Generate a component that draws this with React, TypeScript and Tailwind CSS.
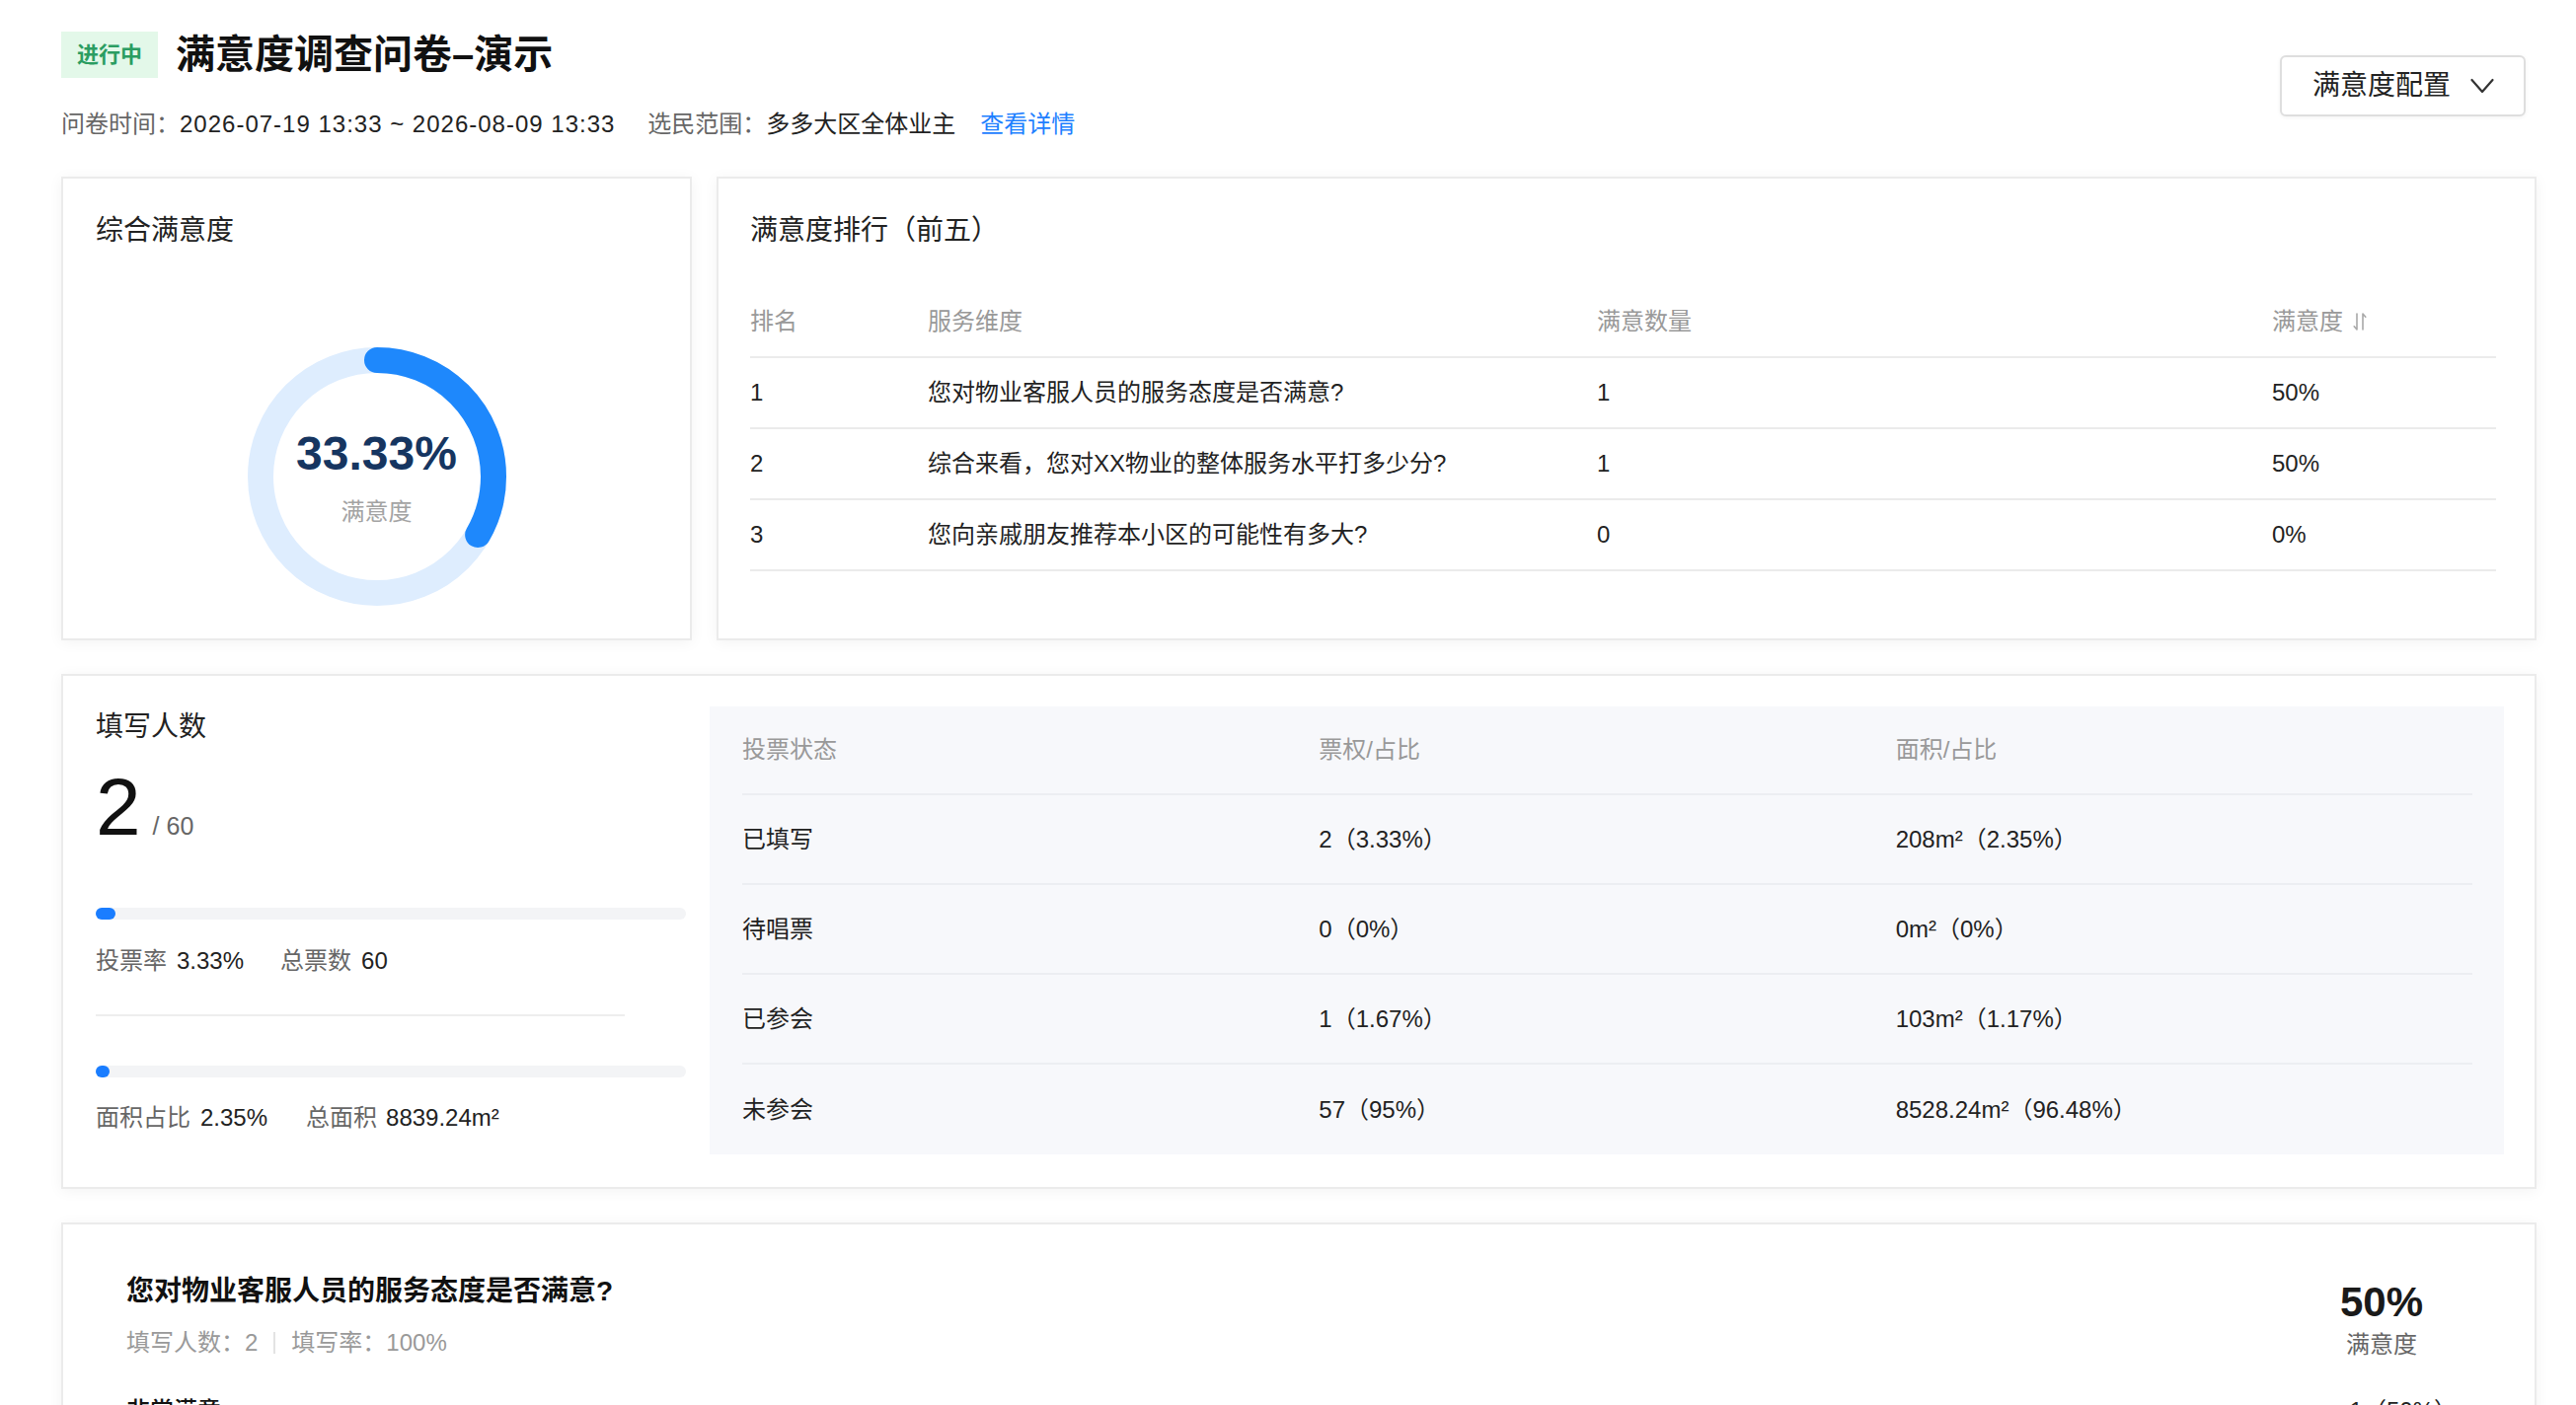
import React from "react";

const ranking = [
  { rank: 1, name: "您对物业客服人员的服务态度是否满意?", count: 1, rate: "50%" },
  { rank: 2, name: "综合来看，您对XX物业的整体服务水平打多少分?", count: 1, rate: "50%" },
  { rank: 3, name: "您向亲戚朋友推荐本小区的可能性有多大?", count: 0, rate: "0%" },
];

const votes = [
  { status: "已填写", weight: "2（3.33%）", area: "208m²（2.35%）" },
  { status: "待唱票", weight: "0（0%）", area: "0m²（0%）" },
  { status: "已参会", weight: "1（1.67%）", area: "103m²（1.17%）" },
  { status: "未参会", weight: "57（95%）", area: "8528.24m²（96.48%）" },
];

function SortIcon() {
  return (
    <svg width="14" height="20" viewBox="0 0 14 20" fill="none" stroke="#a8a8a8" strokeWidth="1.6" strokeLinecap="round" strokeLinejoin="round">
      <path d="M4 2V18L1.2 14.8" />
      <path d="M10 18V2L12.8 5.2" />
    </svg>
  );
}

function Donut({ percent }: { percent: number }) {
  const r = 118;
  const c = 2 * Math.PI * r;
  return (
    <div className="relative h-[262px] w-[262px]">
      <svg width="262" height="262" viewBox="0 0 262 262" className="-rotate-90">
        <circle cx="131" cy="131" r={r} fill="none" stroke="#deedfe" strokeWidth="26" />
        <circle
          cx="131"
          cy="131"
          r={r}
          fill="none"
          stroke="#1e88fc"
          strokeWidth="26"
          strokeLinecap="round"
          strokeDasharray={`${(c * percent) / 100} ${c}`}
        />
      </svg>
      <div className="absolute inset-0 flex flex-col items-center justify-center pt-[4px]">
        <div className="text-[48px] font-bold leading-none text-[#163560]">{percent.toFixed(2)}%</div>
        <div className="mt-[19px] text-[24px] leading-[32px] text-[#a3a3a3]">满意度</div>
      </div>
    </div>
  );
}

function Bar({ percent }: { percent: number }) {
  return (
    <div className="h-[12px] w-full rounded-full bg-[#f3f4f6]">
      <div className="h-full min-w-[12px] rounded-full bg-[#1a7dff]" style={{ width: `${percent}%` }} />
    </div>
  );
}

const card = "border-2 border-[#ebebeb] bg-white shadow-[0_2px_14px_rgba(0,0,0,0.05)]";

export default function App() {
  return (
    <div className="min-h-screen bg-white pb-[60px] pl-[62px] pr-[40px] pt-[32px] font-['Liberation_Sans','Noto_Sans_CJK_SC',sans-serif] text-[#222]">
      <header className="flex items-center justify-between">
        <div>
          <div className="flex items-center gap-[18px]">
            <span className="flex h-[47px] items-center bg-[#e3f8e9] px-[16px] text-[22px] font-bold text-[#2b9d62]">进行中</span>
            <h1 className="text-[40px] font-bold leading-[47px] text-[#111]">满意度调查问卷–演示</h1>
          </div>
          <div className="mt-[31px] flex items-center text-[24px] leading-[32px]">
            <span className="text-[#666]">问卷时间：</span>
            <span className="tracking-[1px] text-[#222]">2026-07-19 13:33 ~ 2026-08-09 13:33</span>
            <span className="ml-[33px] text-[#666]">选民范围：</span>
            <span className="text-[#222]">多多大区全体业主</span>
            <a className="ml-[25px] text-[#1e80ff]" href="#">查看详情</a>
          </div>
        </div>
        <button className="mr-[11px] flex h-[62px] items-center gap-[20px] rounded-[6px] border-2 border-[#dedede] bg-white pl-[31px] pr-[30px] text-[28px] text-[#222] shadow-[0_1px_4px_rgba(0,0,0,0.05)]">
          满意度配置
          <svg width="24" height="16" viewBox="0 0 24 16" fill="none" stroke="#333" strokeWidth="2.2" strokeLinecap="round" strokeLinejoin="round">
            <path d="M1.5 2L12 14L22.5 2" />
          </svg>
        </button>
      </header>

      <section className="mt-[37px] flex gap-[25px]">
        <div className={`${card} h-[470px] w-[639px] pl-[33px] pt-[35px]`}>
          <h2 className="text-[28px] leading-[36px]">综合满意度</h2>
          <div className="mt-[100px] flex justify-center pr-[33px]">
            <Donut percent={33.33} />
          </div>
        </div>

        <div className={`${card} h-[470px] flex-1 pl-[32px] pr-[39px] pt-[35px]`}>
          <h2 className="text-[28px] leading-[36px]">满意度排行（前五）</h2>
          <div className="mt-[39px] text-[24px]">
            <div className="grid h-[72px] grid-cols-[180px_678px_684px_1fr] items-center border-b-2 border-[#ebebeb] text-[#999]">
              <span>排名</span>
              <span>服务维度</span>
              <span>满意数量</span>
              <span className="flex items-center gap-[10px]">
                满意度
                <SortIcon />
              </span>
            </div>
            {ranking.map((row) => (
              <div key={row.rank} className="grid h-[72px] grid-cols-[180px_678px_684px_1fr] items-center border-b-2 border-[#ebebeb]">
                <span>{row.rank}</span>
                <span>{row.name}</span>
                <span>{row.count}</span>
                <span>{row.rate}</span>
              </div>
            ))}
          </div>
        </div>
      </section>

      <section className={`${card} mt-[34px] flex gap-[24px] pb-[33px] pl-[33px] pr-[31px] pt-[31px]`}>
        <div className="w-[598px] shrink-0 pt-[3px]">
          <h2 className="text-[28px] leading-[36px]">填写人数</h2>
          <div className="mt-[22px] flex items-baseline">
            <span className="text-[82px] font-medium leading-none text-[#111]">2</span>
            <span className="ml-[12px] text-[25px] leading-[32px] text-[#666]">/ 60</span>
          </div>
          <div className="mt-[61px]">
            <Bar percent={3.33} />
          </div>
          <div className="mt-[26px] text-[24px] leading-[32px]">
            <span className="text-[#666]">投票率</span>
            <span className="ml-[10px]">3.33%</span>
            <span className="ml-[37px] text-[#666]">总票数</span>
            <span className="ml-[10px]">60</span>
          </div>
          <div className="mt-[38px] h-[2px] w-[536px] bg-[#eeeeee]" />
          <div className="mt-[50px]">
            <Bar percent={2.35} />
          </div>
          <div className="mt-[25px] text-[24px] leading-[32px]">
            <span className="text-[#666]">面积占比</span>
            <span className="ml-[10px]">2.35%</span>
            <span className="ml-[39px] text-[#666]">总面积</span>
            <span className="ml-[9px]">8839.24m²</span>
          </div>
        </div>

        <div className="flex-1 bg-[#f7f8fb] pl-[33px] pr-[32px] text-[24px]">
          <div className="grid h-[90px] grid-cols-3 items-center border-b-2 border-[#eceef2] text-[#999]">
            <span>投票状态</span>
            <span>票权/占比</span>
            <span>面积/占比</span>
          </div>
          {votes.map((row, i) => (
            <div
              key={row.status}
              className={`grid h-[91px] grid-cols-3 items-center ${i < votes.length - 1 ? "border-b-2 border-[#eceef2]" : ""}`}
            >
              <span>{row.status}</span>
              <span>{row.weight}</span>
              <span>{row.area}</span>
            </div>
          ))}
        </div>
      </section>

      <section className={`${card} mt-[34px] pb-[40px] pl-[64px] pr-[55px] pt-[50px]`}>
        <div className="flex items-start justify-between">
          <div>
            <h3 className="text-[28px] font-bold leading-[36px] text-[#111]">您对物业客服人员的服务态度是否满意?</h3>
            <div className="mt-[18px] flex items-center text-[24px] leading-[32px] text-[#999]">
              <span>填写人数：2</span>
              <span className="mx-[16px] h-[22px] w-[2px] bg-[#e3e3e3]" />
              <span>填写率：100%</span>
            </div>
          </div>
          <div className="mt-[8px] flex w-[200px] flex-col items-center">
            <div className="text-[42px] font-bold leading-none text-[#1a1a1a]">50%</div>
            <div className="mt-[6px] text-[24px] leading-[32px] text-[#666]">满意度</div>
          </div>
        </div>
        <div className="mr-[23px] mt-[35px] flex items-center justify-between text-[24px] leading-[32px]">
          <span className="font-medium text-[#111]">非常满意</span>
          <span>1（50%）</span>
        </div>
        <div className="mr-[23px] mt-[16px]">
          <Bar percent={50} />
        </div>
        <div className="mr-[23px] mt-[30px] flex items-center justify-between text-[24px] leading-[32px]">
          <span className="font-medium text-[#111]">满意</span>
          <span>1（50%）</span>
        </div>
        <div className="mr-[23px] mt-[16px]">
          <Bar percent={50} />
        </div>
      </section>
    </div>
  );
}
